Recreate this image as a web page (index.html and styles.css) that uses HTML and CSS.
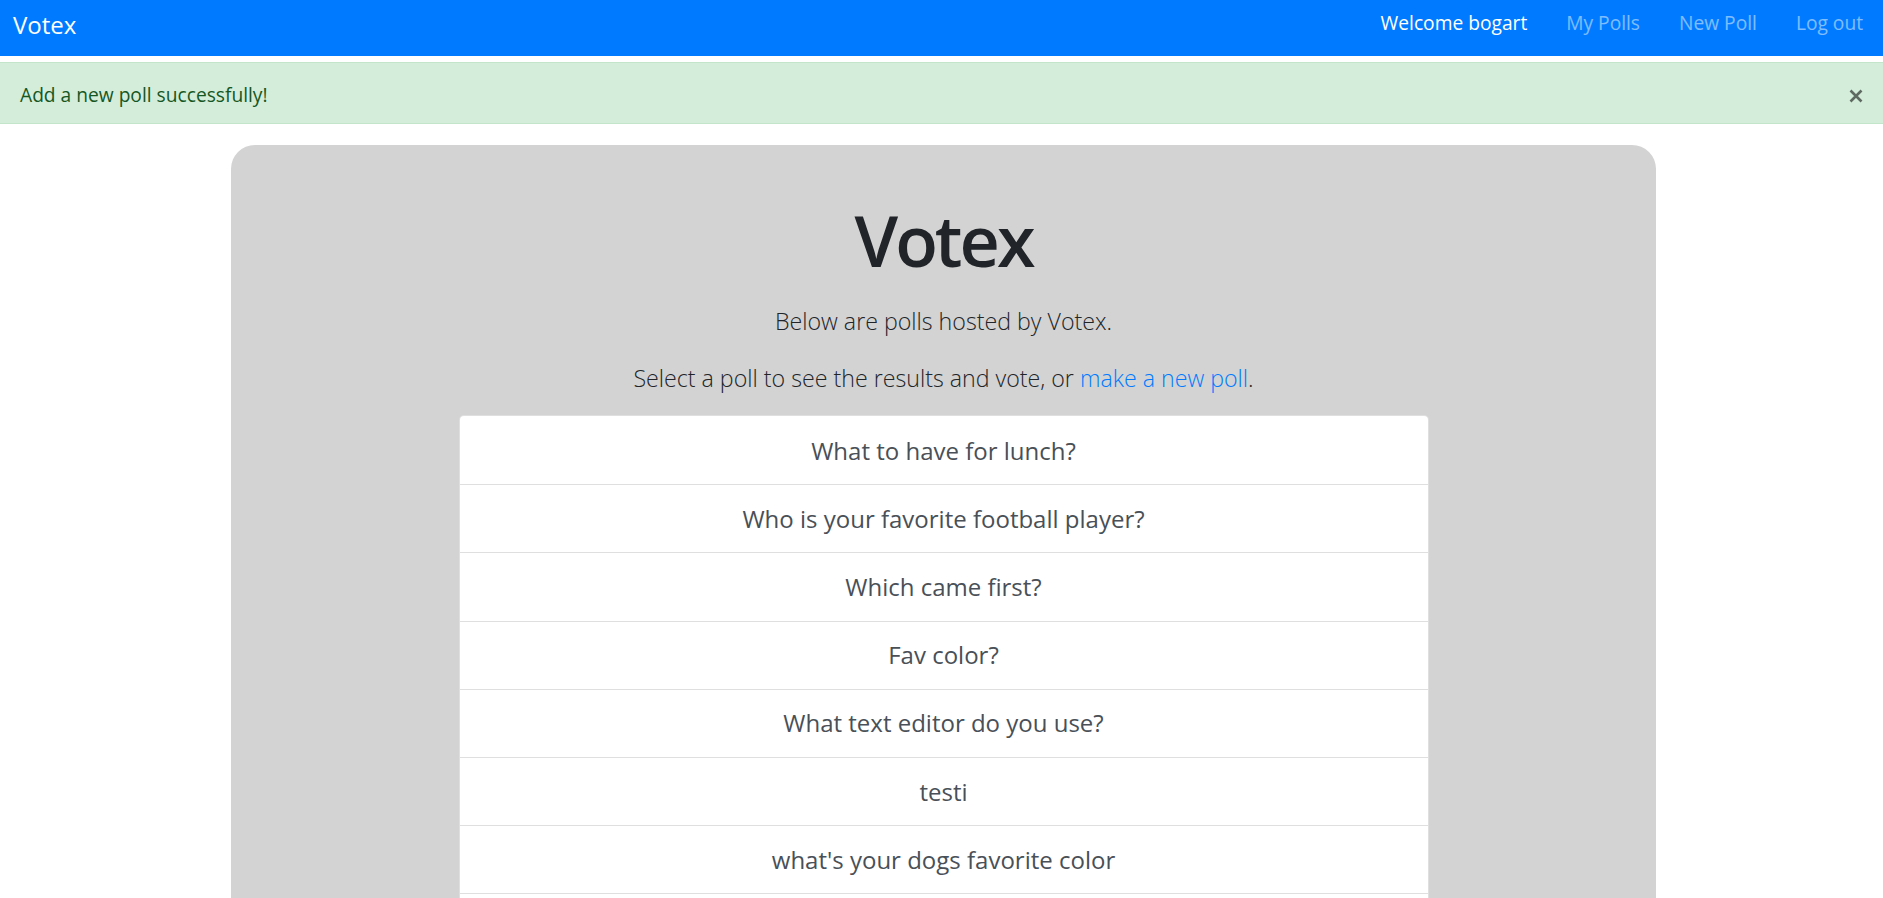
FILE: index.html
```html
<!DOCTYPE html>
<html lang="en">
<head>
<meta charset="utf-8">
<title>Votex</title>
<link rel="stylesheet" href="styles.css">
</head>
<body>
<nav class="navbar">
  <a class="brand" href="#">Votex</a>
  <ul class="nav-links">
    <li><a class="nav-link active" href="#">Welcome bogart</a></li>
    <li><a class="nav-link" href="#">My Polls</a></li>
    <li><a class="nav-link" href="#">New Poll</a></li>
    <li><a class="nav-link" href="#">Log out</a></li>
  </ul>
</nav>
<div class="alert">
  <span class="alert-text">Add a new poll successfully!</span>
  <button class="close" aria-label="Close">
    <svg width="14" height="14" viewBox="0 0 14 14"><path d="M1.5 1.5 L12.5 12.5 M12.5 1.5 L1.5 12.5" stroke="#5e6a61" stroke-width="2.6" stroke-linecap="butt" fill="none"/></svg>
  </button>
</div>
<main class="jumbotron">
  <h1 class="title">Votex</h1>
  <p class="lead lead-first">Below are polls hosted by Votex.</p>
  <p class="lead lead-second">Select a poll to see the results and vote, or <a href="#" class="link">make a new poll</a>.</p>
  <div class="list-group">
    <a href="#" class="list-item">What to have for lunch?</a>
    <a href="#" class="list-item">Who is your favorite football player?</a>
    <a href="#" class="list-item">Which came first?</a>
    <a href="#" class="list-item">Fav color?</a>
    <a href="#" class="list-item">What text editor do you use?</a>
    <a href="#" class="list-item">testi</a>
    <a href="#" class="list-item">what's your dogs favorite color</a>
    <div class="list-item list-item-empty"></div>
  </div>
</main>
</body>
</html>
```
FILE: styles.css
```css
* { box-sizing: border-box; }
html, body { margin: 0; padding: 0; }
body {
  font-family: "Open Sans", "Liberation Sans", sans-serif;
  font-size: 19.2px;
  line-height: 1.5;
  color: #212529;
  background: #ffffff;
  overflow: hidden;
}
a { text-decoration: none; }

.navbar {
  height: 56px;
  background: #007bff;
  display: flex;
  align-items: center;
  justify-content: space-between;
  padding: 0 20px 0 13px;
}
.brand {
  color: #ffffff;
  font-size: 24px;
  line-height: 30px;
  margin-top: -7px;
}
.nav-links {
  list-style: none;
  margin: 0;
  padding: 0;
  display: flex;
  gap: 39px;
}
.nav-link {
  display: block;
  color: rgba(255,255,255,0.5);
  font-size: 19.2px;
  line-height: 28px;
  margin-top: -10px;
}
.nav-link.active { color: #ffffff; }

.alert {
  margin-top: 6px;
  background: #d4edda;
  border-top: 1px solid #c3e6cb;
  border-bottom: 1px solid #c3e6cb;
  color: #155724;
  height: 62px;
  padding: 15px 20px 15px 20px;
  line-height: 30px;
  display: flex;
  align-items: center;
  justify-content: space-between;
}
.alert-text { margin-top: 4px; }
.close {
  background: none;
  border: 0;
  padding: 0;
  width: 14px;
  height: 14px;
  display: block;
  margin-top: 6px;
}
.close svg { display: block; }

.jumbotron {
  margin: 21px 227px 0 231px;
  background: #d3d3d3;
  border-radius: 24px;
  padding: 53px 0 200px;
  display: flex;
  flex-direction: column;
  align-items: center;
}
.title {
  margin: 0 0 21px;
  font-size: 70px;
  font-weight: 600;
  line-height: 84px;
  color: #212529;
  letter-spacing: -3px;
}
.lead {
  margin: 0;
  font-size: 23.2px;
  font-weight: 300;
  line-height: 36px;
  color: #212529;
}
.lead-first { margin-bottom: 21px; }
.lead-second { margin-bottom: 19px; }
.link { color: #007bff; }

.list-group {
  width: 970px;
  background: #ffffff;
  border: 1px solid rgba(0,0,0,0.125);
  border-radius: 5px;
  display: flex;
  flex-direction: column;
}
.list-item {
  display: block;
  text-align: center;
  font-size: 24px;
  line-height: 36px;
  padding: 15.6px 20px 15.6px;
  color: #495057;
  border-top: 1px solid rgba(0,0,0,0.125);
}
.list-item:first-child { border-top: 0; padding-top: 16.6px; }
.list-item-empty { height: 68px; }
```
